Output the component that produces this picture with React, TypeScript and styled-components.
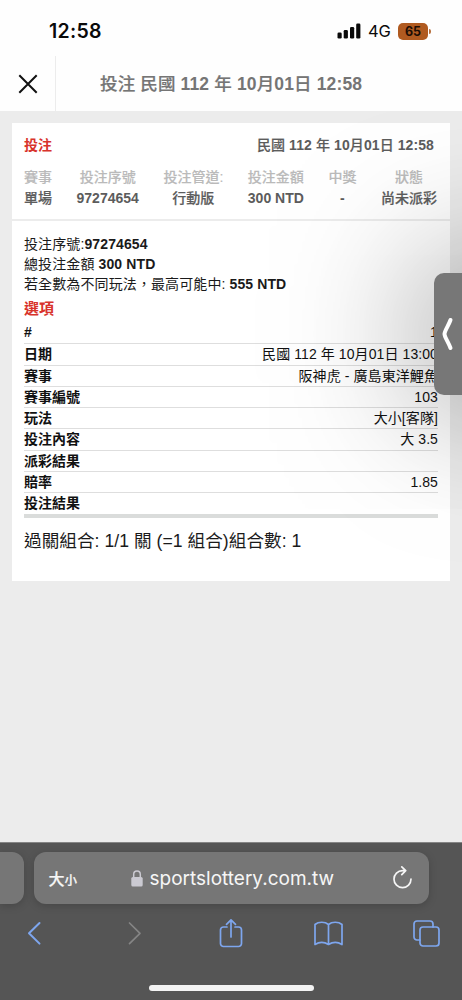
import React from 'react';
import styled, { createGlobalStyle } from 'styled-components';

const GlobalStyle = createGlobalStyle`
  * { box-sizing: border-box; }
  body {
    margin: 0;
    background: #ececec;
    font-family: "Liberation Sans", "Noto Sans CJK TC", sans-serif;
  }
`;

const Screen = styled.div`
  width: 462px;
  height: 1000px;
  display: flex;
  flex-direction: column;
  overflow: hidden;
  background: #ececec;
`;

const StatusBar = styled.div`
  flex: none;
  height: 56px;
  padding: 6px 31px 0 49px;
  display: flex;
  align-items: center;
  background: #fefefe;
  font-family: Inter, sans-serif;
  color: #0a0a0a;
`;

const Clock = styled.span`
  flex: 1;
  font-size: 19.5px;
  font-weight: 600;
  letter-spacing: 0.3px;
`;

const Network = styled.span`
  margin: 0 7px 0 7px;
  width: 23px;
  font-size: 16.5px;
  letter-spacing: -0.1px;
  white-space: nowrap;
`;

const Battery = styled.span`
  width: 30px;
  height: 17px;
  border-radius: 5px;
  background: #b05a20;
  color: #1c0d04;
  font-size: 12.5px;
  font-weight: 700;
  line-height: 17px;
  text-align: center;
`;

const BatteryTip = styled.span`
  width: 2px;
  height: 5px;
  margin-left: 1px;
  border-radius: 0 2px 2px 0;
  background: #b8713f;
`;

const TitleBar = styled.header`
  flex: none;
  height: 55px;
  display: flex;
  align-items: stretch;
  background: #fefefe;
`;

const CloseButton = styled.div`
  width: 56px;
  border-right: 1px solid #ececec;
  display: flex;
  align-items: center;
  justify-content: center;
`;

const Title = styled.div`
  flex: 1;
  padding-left: 44px;
  line-height: 56px;
  font-size: 17.5px;
  letter-spacing: 0.14px;
  font-weight: 700;
  color: #757575;
  white-space: nowrap;
`;

const Han = styled.span`
  font-weight: 500;
  -webkit-text-stroke: 0.2px currentColor;
`;

const Content = styled.main`
  position: relative;
  flex: none;
  height: 731px;
  padding: 12px 12px 0;
  overflow: hidden;
  background: #ececec;
`;

const Card = styled.section`
  height: 458px;
  background: #fff;
  color: #1a1a1a;
  font-size: 14px;
`;

const Summary = styled.div`
  height: 98px;
  padding: 12px 13px 0 12px;
  border-bottom: 2px solid #ececec;
  font-weight: 700;
  color: #5c5c5c;
`;

const SummaryTop = styled.div`
  display: flex;
  justify-content: space-between;
  height: 32px;
  padding-right: 3px;
  line-height: 20px;
  letter-spacing: 0.09px;
  white-space: nowrap;
`;

const Accent = styled.span<{ $size?: number }>`
  color: #d8332b;
  font-weight: 700;
  font-size: ${(p) => p.$size ?? 14}px;
`;

const Columns = styled.div`
  display: flex;
  justify-content: space-between;
`;

const Column = styled.div`
  display: flex;
  flex-direction: column;
  align-items: center;
  line-height: 21px;
  white-space: nowrap;
`;

const ColumnLabel = styled.span`
  color: #bababa;
  font-weight: 500;
  -webkit-text-stroke: 0.15px currentColor;
`;

const Details = styled.div`
  padding: 13px 12px 0;
`;

const DetailLine = styled.p`
  margin: 0;
  line-height: 20px;
  letter-spacing: 0.11px;
  white-space: nowrap;
`;

const SectionTitle = styled.div`
  height: 28px;
  line-height: 29px;
`;

const Rows = styled.dl`
  margin: 0;
  border-bottom: 4px solid #dadcdb;
  color: #111;
`;

const Row = styled.div`
  display: flex;
  justify-content: space-between;
  height: 21.3px;
  line-height: 21px;
  white-space: nowrap;
  & + & { border-top: 1px solid #dedede; }
`;

const Term = styled.dt`
  font-weight: 700;
`;

const Value = styled.dd`
  margin: 0;
  letter-spacing: 0.09px;
`;

const Combo = styled.div`
  padding-top: 10px;
  line-height: 26px;
  font-size: 17.6px;
  letter-spacing: 0.05px;
  white-space: nowrap;
`;

const DrawerTab = styled.div`
  position: absolute;
  top: 162px;
  left: 434px;
  width: 120px;
  height: 122px;
  border-radius: 10px;
  background: #777;
  box-shadow: 0 0 150px rgba(0, 0, 0, 0.56);
`;

const TabArrow = styled.svg`
  display: block;
  margin: 44px 0 0 7px;
`;

const Browser = styled.footer`
  flex: none;
  height: 158px;
  display: flex;
  flex-direction: column;
  background: #555;
  border-top: 1px solid #858585;
`;

const AddressRow = styled.div`
  display: flex;
  gap: 10px;
  padding-top: 9px;
`;

const PreviousTab = styled.div`
  width: 23.5px;
  height: 52px;
  border-radius: 0 12px 12px 0;
  background: #767676;
  box-shadow: 0 2px 9px rgba(0, 0, 0, 0.18);
`;

const AddressBar = styled.div`
  width: 395px;
  height: 52px;
  padding: 0 15px;
  display: flex;
  align-items: center;
  border-radius: 12px;
  background: #767676;
  color: #f6f6f6;
  box-shadow: 0 2px 9px rgba(0, 0, 0, 0.18);
`;

const TextSize = styled.span`
  flex: none;
  width: 82px;
  font-family: "Noto Sans CJK TC", sans-serif;
  font-size: 16px;
  font-weight: 500;
  -webkit-text-stroke: 0.2px currentColor;
  small { font-size: 12.5px; }
`;

const Url = styled.span`
  flex: 1;
  margin-left: 7px;
  font-family: Inter, sans-serif;
  font-size: 19px;
  white-space: nowrap;
`;

const Toolbar = styled.nav`
  display: flex;
  justify-content: space-between;
  align-items: center;
  height: 58px;
  padding: 0 21px 0 20px;
`;

const HomeIndicator = styled.div`
  width: 165px;
  height: 6px;
  margin: 23px auto 0;
  border-radius: 3px;
  background: #f3f3f3;
`;

const columns = [
  ['賽事', '單場'],
  ['投注序號', '97274654'],
  ['投注管道:', '行動版'],
  ['投注金額', '300 NTD'],
  ['中獎', '-'],
  ['狀態', '尚未派彩'],
];

const rows = [
  ['#', '1'],
  ['日期', '民國 112 年 10月01日 13:00'],
  ['賽事', '阪神虎 - 廣島東洋鯉魚'],
  ['賽事編號', '103'],
  ['玩法', '大小[客隊]'],
  ['投注內容', '大 3.5'],
  ['派彩結果', ''],
  ['賠率', '1.85'],
  ['投注結果', ''],
];

// Bold Latin text with medium-weight Han characters.
function Mixed({ text }: { text: string }) {
  return (
    <span>
      {text.split(/([\u4e00-\u9fff]+)/).map((part, i) => (i % 2 ? <Han key={i}>{part}</Han> : part))}
    </span>
  );
}

const line = { fill: 'none', strokeLinecap: 'round', strokeLinejoin: 'round' } as const;
const BLUE = '#7ea6ee';

export default function App() {
  return (
    <Screen>
      <GlobalStyle />
      <StatusBar>
        <Clock>12:58</Clock>
        <svg width="24" height="16" viewBox="0 0 24 16" fill="#0a0a0a">
          <rect x="0.5" y="9.5" width="4.2" height="6" rx="1.3" />
          <rect x="6.7" y="7" width="4.2" height="8.5" rx="1.3" />
          <rect x="13" y="4" width="4.2" height="11.5" rx="1.3" />
          <rect x="19.2" y="0.5" width="4.2" height="15" rx="1.3" />
        </svg>
        <Network>4G</Network>
        <Battery>65</Battery>
        <BatteryTip />
      </StatusBar>
      <TitleBar>
        <CloseButton>
          <svg width="20" height="20" viewBox="0 0 20 20" stroke="#111" strokeWidth="2" fill="none">
            <path d="M1.3 1.3 18.7 18.7M18.7 1.3 1.3 18.7" />
          </svg>
        </CloseButton>
        <Title><Mixed text="投注 民國 112 年 10月01日 12:58" /></Title>
      </TitleBar>
      <Content>
        <Card>
          <Summary>
            <SummaryTop>
              <Accent>投注</Accent>
              <Mixed text="民國 112 年 10月01日 12:58" />
            </SummaryTop>
            <Columns>
              {columns.map(([label, value]) => (
                <Column key={label}>
                  <ColumnLabel>{label}</ColumnLabel>
                  <Mixed text={value} />
                </Column>
              ))}
            </Columns>
          </Summary>
          <Details>
            <DetailLine>投注序號:<b>97274654</b></DetailLine>
            <DetailLine>總投注金額 <b>300 NTD</b></DetailLine>
            <DetailLine>若全數為不同玩法，最高可能中: <b>555 NTD</b></DetailLine>
            <SectionTitle><Accent $size={15}>選項</Accent></SectionTitle>
            <Rows>
              {rows.map(([term, value]) => (
                <Row key={term}>
                  <Term>{term}</Term>
                  <Value>{value}</Value>
                </Row>
              ))}
            </Rows>
            <Combo>過關組合: 1/1 關 (=1 組合)組合數: 1</Combo>
          </Details>
        </Card>
        <DrawerTab>
          <TabArrow width="14" height="34" viewBox="0 0 14 34">
            <path {...line} d="M9.5 3C7.5 8.5 3.5 14 3.5 17S7.5 25.5 9.5 31" stroke="#fff" strokeWidth="4" />
          </TabArrow>
        </DrawerTab>
      </Content>
      <Browser>
        <AddressRow>
          <PreviousTab />
          <AddressBar>
            <TextSize>大<small>小</small></TextSize>
            <svg width="12" height="17" viewBox="0 0 12 17">
              <rect x="0.3" y="7" width="11.4" height="9.5" rx="1.6" fill="#cbcad2" />
              <path d="M2.7 7.5V4.4a3.3 3.3 0 0 1 6.6 0v3.1" fill="none" stroke="#cbcad2" strokeWidth="1.5" />
            </svg>
            <Url>sportslottery.com.tw</Url>
            <svg width="22" height="24" viewBox="0 0 22 24">
              <path {...line} d="M13.3 4.6H10.5A8.5 8.5 0 1 0 19 13M9.8 .9 13.7 4.7 9.8 8.7" stroke="#f6f6f6" strokeWidth="1.7" />
            </svg>
          </AddressBar>
        </AddressRow>
        <Toolbar>
          <svg width="28" height="32" viewBox="0 0 28 32">
            <path {...line} d="M19.5 6 9 16.3 19.5 26.6" stroke={BLUE} strokeWidth="2" />
          </svg>
          <svg width="28" height="32" viewBox="0 0 28 32">
            <path {...line} d="M11.5 6 22 16.3 11.5 26.6" stroke="#858585" strokeWidth="1.7" />
          </svg>
          <svg width="28" height="32" viewBox="0 0 28 32">
            <path {...line} d="M11 10H7.5a3 3 0 0 0-3 3v13.5a3 3 0 0 0 3 3H22.5a3 3 0 0 0 3-3V13a3 3 0 0 0-3-3H19M15 20V3M10.5 7.3 15 2.8l4.5 4.5" stroke={BLUE} strokeWidth="1.7" />
          </svg>
          <svg width="30" height="32" viewBox="0 0 30 32">
            <path {...line} d="M15.5 7.5C12 4.5 5.5 4.5 2 7.5v20c4-2.5 9.500-2.500 13.500 0 4-2.500 9.500-2.500 13.500 0v-20C25.500 4.500 19 4.500 15.500 7.500v20" stroke={BLUE} strokeWidth="1.7" />
          </svg>
          <svg width="28" height="32" viewBox="0 0 28 32">
            <rect {...line} x="7" y="10" width="19" height="19" rx="3" stroke={BLUE} strokeWidth="1.7" />
            <path {...line} d="M7 23H4a3 3 0 0 1-3-3V7a3 3 0 0 1 3-3h13a3 3 0 0 1 3 3v3" stroke={BLUE} strokeWidth="1.7" />
          </svg>
        </Toolbar>
        <HomeIndicator />
      </Browser>
    </Screen>
  );
}
